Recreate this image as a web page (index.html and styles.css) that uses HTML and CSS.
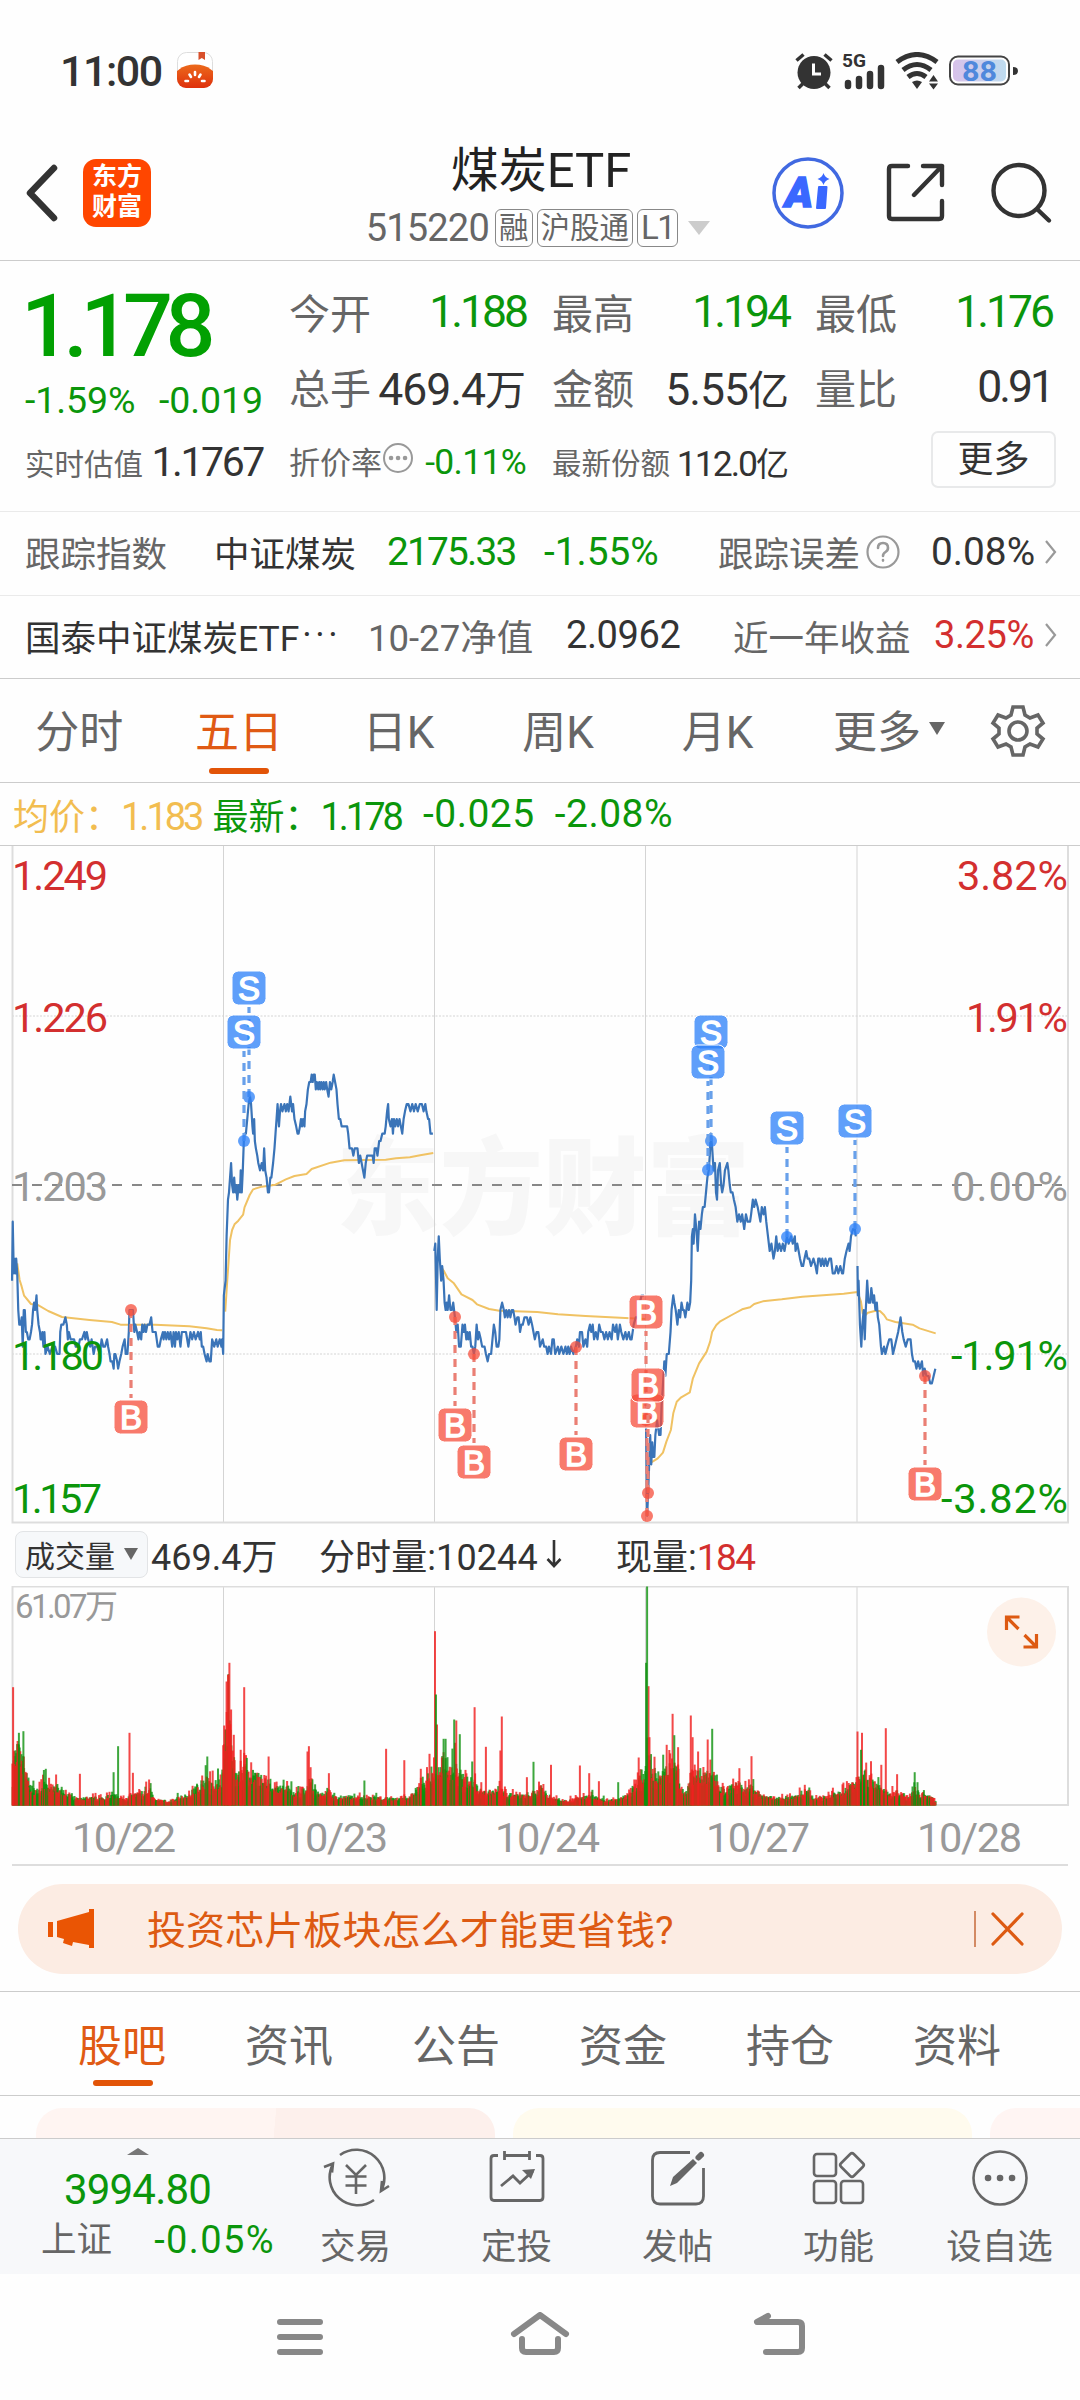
FILE: index.html
```html
<!DOCTYPE html>
<html lang="zh-CN">

<head>
    <meta charset="utf-8">
    <title>煤炭ETF</title>
    <link rel="stylesheet" href="styles.css">
</head>

<body>
    <div class="status">
        <span class="time">11:00</span>
        <svg class="app-ico" width="36" height="36" viewBox="0 0 36 36">
            <defs>
                <clipPath id="appClip"><rect width="36" height="36" rx="9" /></clipPath>
                <linearGradient id="tomato" x2="0" y2="1"><stop offset="0" stop-color="#ec6a1c" /><stop offset="1" stop-color="#d81404" /></linearGradient>
            </defs>
            <rect x=".5" y=".5" width="35" height="35" rx="9" fill="#fff" stroke="#ddd" />
            <ellipse cx="18" cy="30" rx="23" ry="17.5" fill="url(#tomato)" clip-path="url(#appClip)" />
            <path d="M21.500 0h6.500v8l-3.200-2-3.300 2z" fill="#d8502c" />
            <path d="M18 20v3M12.500 22.500l1.500 2.500M23.500 22.500l-1.500 2.500M8.500 29h2.500M25 29h2.500" stroke="#fff" stroke-width="2.600" stroke-linecap="round" />
        </svg>
        <div class="status-right">
            <svg width="38" height="38" viewBox="0 0 38 38">
                <circle cx="19" cy="20.500" r="16.500" fill="#333" />
                <path d="M1.500 8.500l7-6M36.500 8.500l-7-6M3.500 36l5-5M34.500 36l-5-5" stroke="#333" stroke-width="3.500" />
                <path d="M18.500 11.500V22H26" fill="none" stroke="#fff" stroke-width="3" />
            </svg>
            <svg class="signal" width="43" height="48" viewBox="0 -4 43 48">
                <text x="0" y="16" class="g5" textLength="24" lengthAdjust="spacingAndGlyphs">5G</text>
                <path d="M6 32v3M17 28v7M28 23v12M39 17v18" stroke="#333" stroke-width="6.500" stroke-linecap="round" />
            </svg>
            <svg class="wifi" width="44" height="38" viewBox="0 0 44 38">
                <path d="M2 10Q22-5 42 10M8 18Q22 7 36 18M13 25Q22 18 31 25" fill="none" stroke="#333" stroke-width="5" />
                <path d="M17 30q5-3 10 0l-5 7z" fill="#333" />
                <path d="M34 29.500l4.500-6.500 4.500 6.500zM34 31.500l4.500 6 4.500-6z" fill="#333" />
            </svg>
            <svg class="battery" width="70" height="32" viewBox="0 0 70 32">
                <defs>
                    <linearGradient id="bat"><stop offset="0" stop-color="#d8c2ea" /><stop offset="1" stop-color="#bedcf0" /></linearGradient>
                </defs>
                <rect x="1" y="1.500" width="59" height="28" rx="8" fill="#fff" stroke="#444" stroke-width="2" />
                <rect x="4" y="4.500" width="53" height="22" rx="5" fill="url(#bat)" />
                <path d="M64 12q5 0 5 4t-5 4z" fill="#333" />
                <text x="13" y="26" class="bat-num" textLength="35" lengthAdjust="spacingAndGlyphs">88</text>
            </svg>
        </div>
    </div>

    <div class="header">
        <svg class="back" width="34" height="58" viewBox="0 0 34 58"><path d="M29 4L5 29l24 25" fill="none" stroke="#333" stroke-width="6.500" stroke-linecap="round" stroke-linejoin="round" /></svg>
        <div class="logo">东方<br>财富</div>
        <div class="title">
            <h1>煤炭<span>ETF</span></h1>
            <p><span class="code">515220</span><i>融</i><i>沪股通</i><i class="l1">L1</i><b></b></p>
        </div>
        <svg class="ai" width="74" height="74" viewBox="0 0 74 74">
            <circle cx="37" cy="37" r="34" fill="#fff" stroke="#4169e1" stroke-width="3.500" />
            <text x="14" y="51" textLength="28" lengthAdjust="spacingAndGlyphs">A</text>
            <path d="M48 31h7.500l-1.500 21h-8z" fill="#3a68ff" stroke="#3a68ff" stroke-width="2" stroke-linejoin="round" />
            <path d="M52.500 17q1.300 4.500 6 6-4.700 1.500-6 6-1.300-4.500-6-6 4.700-1.500 6-6z" fill="#3a68ff" />
        </svg>
        <svg class="share" width="60" height="60" viewBox="0 0 60 60" fill="none" stroke="#333" stroke-width="4.400" stroke-linecap="round" stroke-linejoin="round">
            <path d="M22 3H6Q3 3 3 6V53Q3 56 6 56H53Q56 56 56 53V38M37 3H56V22M56 3L28 32" />
        </svg>
        <svg class="search" width="62" height="62" viewBox="0 0 62 62" fill="none" stroke="#333" stroke-width="4.400" stroke-linecap="round"><circle cx="28" cy="28.500" r="25.500" /><path d="M47 48l11 10.500" /></svg>
    </div>

    <div class="stats">
        <div class="price">
            <div class="big">1.178</div>
            <div class="chg"><span>-1.59%</span><span>-0.019</span></div>
            <div class="est"><label>实时估值</label><span>1.1767</span></div>
        </div>
        <div class="col">
            <p><label>今开</label><span class="green">1.188</span></p>
            <p class="wide"><label>总手</label><span>469.4<em>万</em></span></p>
            <p class="sm"><label>折价率<svg width="32" height="32" viewBox="0 0 32 32"><circle cx="16" cy="16" r="14" fill="none" stroke="#999" stroke-width="2" /><path d="M9 16h.1M16 16h.1M23 16h.1" stroke="#999" stroke-width="4.500" stroke-linecap="round" /></svg></label><span class="green">-0.11%</span></p>
        </div>
        <div class="col">
            <p><label>最高</label><span class="green">1.194</span></p>
            <p class="wide"><label>金额</label><span>5.55<em>亿</em></span></p>
            <p class="sm tight"><label>最新份额</label><span>112.0<em>亿</em></span></p>
        </div>
        <div class="col">
            <p><label>最低</label><span class="green">1.176</span></p>
            <p><label>量比</label><span>0.91</span></p>
            <button type="button">更多</button>
        </div>
    </div>

    <div class="line-row r1">
        <span class="gray">跟踪指数</span>
        <span>中证煤炭</span>
        <span class="green tight">2175.33</span>
        <span class="green">-1.55%</span>
        <span class="gray">跟踪误差<svg width="36" height="36" viewBox="0 0 36 36"><circle cx="18" cy="18" r="15.500" fill="none" stroke="#999" stroke-width="2.200" /><path d="M13 14q0-5 5-5t5 5q0 2.500-2.500 4T18 22M18 26v.6" fill="none" stroke="#999" stroke-width="2.600" stroke-linecap="round" /></svg></span>
        <span>0.08%</span>
        <svg class="chev" width="14" height="28" viewBox="0 0 14 28"><path d="M2 3l9 11-9 11" fill="none" stroke="#999" stroke-width="2.200" /></svg>
    </div>
    <div class="line-row r2">
        <span>国泰中证煤炭ETF<small>···</small></span>
        <span class="gray">10-27净值</span>
        <span>2.0962</span>
        <span class="gray">近一年收益</span>
        <span class="red">3.25%</span>
        <svg class="chev" width="14" height="28" viewBox="0 0 14 28"><path d="M2 3l9 11-9 11" fill="none" stroke="#999" stroke-width="2.200" /></svg>
    </div>

    <div class="tabs">
        <a>分时</a><a class="on">五日</a><a>日K</a><a>周K</a><a>月K</a><a class="more">更多<b></b></a>
        <svg width="56" height="56" viewBox="-28 -28 56 56" fill="none" stroke="#666" stroke-width="3.600">
            <circle r="9" />
            <path d="M-5-24H5L7-16L12-13L20-16L25-8L19-3V3L25 8L20 16L12 13L7 16L5 24H-5L-7 16L-12 13L-20 16L-25 8L-19 3V-3L-25-8L-20-16L-12-13L-7-16z" />
        </svg>
    </div>

    <div class="legend">
        <span class="yellow">均价：<i>1.183</i></span><span class="green">最新：<i>1.178</i></span><span class="green">-0.025</span><span class="green">-2.08%</span>
    </div>

    <!-- 价格走势 -->
    <svg class="chart" width="1080" height="678" viewBox="0 846 1080 678">
        <text class="water" x="336" y="1226" textLength="414" lengthAdjust="spacingAndGlyphs">东方财富</text>
        <g class="grid">
            <path d="M223.500 846V1523M434.500 846V1523M645.500 846V1523M857 846V1523" />
            <path d="M12 1016H1068M12 1354H1068" stroke-dasharray="2 1.500" />
            <path class="frame" d="M12.500 846V1522.500H1068V846" />
            <path class="mid" d="M12 1185H1068" stroke-dasharray="10 10" />
        </g>
        <svg x="0" y="1120" width="1080" height="420" viewBox="0 0 3136 1260" preserveAspectRatio="none" overflow="visible">
            <g id="avg"></g>
            <g id="prices"></g>
        </svg>
        <g class="axis">
            <text x="12" y="890" class="t-red" textLength="96">1.249</text>
            <text x="12" y="1032" class="t-red" textLength="96">1.226</text>
            <text x="12" y="1201" class="t-gray" textLength="96">1.203</text>
            <text x="12" y="1370" class="t-green" textLength="92">1.180</text>
            <text x="12" y="1513" class="t-green" textLength="90">1.157</text>
            <text x="957" y="890" class="t-red" textLength="111">3.82%</text>
            <text x="966" y="1032" class="t-red" textLength="102">1.91%</text>
            <text x="952" y="1201" class="t-gray" textLength="116">0.00%</text>
            <text x="951" y="1370" class="t-green" textLength="117">-1.91%</text>
            <text x="941" y="1513" class="t-green" textLength="127">-3.82%</text>
        </g>
        <g id="marks"></g>
    </svg>

    <div class="vol-head">
        <div class="select">成交量<b></b></div>
        <span class="v1">469.4万</span>
        <span class="v2">分时量:10244<svg width="16" height="30" viewBox="0 0 16 30"><path d="M8 1v26M1.500 20L8 27l6.500-7" fill="none" stroke="#333" stroke-width="2.600" /></svg></span>
        <span class="v3">现量:<em>184</em></span>
    </div>

    <!-- 成交量 -->
    <svg class="volume" width="1080" height="282" viewBox="0 1586 1080 282">
        <g class="grid">
            <path d="M223.500 1586V1805M434.500 1586V1805M645.500 1586V1805M857 1586V1805" />
            <path class="frame" d="M12.500 1586.500H1068V1805H12.500z" />
            <path class="frame" d="M12 1865H1068" />
        </g>
        <text class="vmax" x="15" y="1618" textLength="103">61.07万</text>
        <g id="bars"></g>
        <g class="dates">
            <text x="72" y="1852" textLength="104">10/22</text>
            <text x="283" y="1852" textLength="105">10/23</text>
            <text x="495" y="1852" textLength="105">10/24</text>
            <text x="706" y="1852" textLength="104">10/27</text>
            <text x="917" y="1852" textLength="105">10/28</text>
        </g>
        <circle cx="1021.500" cy="1632" r="34.500" fill="#fdf1e9" />
        <path d="M1006.500 1630v-13h13M1006.500 1617l12 12M1036.500 1634v13h-13M1036.500 1647l-12-12" fill="none" stroke="#dd5a12" stroke-width="3.200" />
    </svg>

    <div class="banner">
        <svg width="46" height="40" viewBox="0 0 46 40" fill="#ea5504"><path d="M0 13h5v15H0zM9 12l32-9V0h5v39h-5v-3l-16-3-1 4-9-3 1-4-7-2z" /></svg>
        <span>投资芯片板块怎么才能更省钱?</span>
        <svg class="close" width="52" height="38" viewBox="0 0 52 38"><path d="M1 1v36" stroke="#c66a3a" stroke-width="1.500" /><path d="M19 4l29 30M48 4L19 34" stroke="#dd5a12" stroke-width="3.200" stroke-linecap="round" /></svg>
    </div>

    <div class="tabs2">
        <a class="on">股吧</a><a>资讯</a><a>公告</a><a>资金</a><a>持仓</a><a>资料</a>
    </div>

    <div class="cards">
        <div class="card pink"></div>
        <div class="card yel"></div>
        <div class="card rose"></div>
    </div>

    <div class="toolbar">
        <div class="index">
            <b></b>
            <strong>3994.80</strong>
            <p><label>上证</label><span>-0.05%</span></p>
        </div>
        <a>
            <svg width="68" height="60" viewBox="0 0 68 60" fill="none" stroke="#666" stroke-width="2.600">
                <path d="M18 7A28 28 0 0 1 59 43M67 38l-8 5 1-10M52 52A28 28 0 0 1 11 16M2 19l9-3.500-1 9" />
                <path d="M24 17l10 10 10-10M34 27v19M23.500 28.500h21M23.500 37.500h21" />
            </svg>交易
        </a>
        <a>
            <svg width="60" height="60" viewBox="0 0 60 60" fill="none" stroke="#666" stroke-width="2.800">
                <path d="M11 7.500H7Q4 7.500 4 10.500V49Q4 52.500 7 52.500H53Q56 52.500 56 49V10.500Q56 7.500 53 7.500H49M17.500 3v9M42.500 3v9M17.500 7.500h25" />
                <path d="M14 38l12-10 7 7 13-12" /><path d="M35 22l13-1-4 10z" fill="#666" stroke="none" />
            </svg>定投
        </a>
        <a>
            <svg width="60" height="60" viewBox="0 0 60 60" fill="none" stroke="#666" stroke-width="2.800">
                <path d="M42 4.500H12Q4.500 4.500 4.500 12V48Q4.500 56 12 56H48Q55.500 56 55.500 48V20" />
                <path d="M22 38l3-9L45 11l4 4-20 20z" fill="#666" stroke="none" /><path d="M50.500 9.500l2.500-2.500" stroke-width="6" stroke-linecap="round" />
            </svg>发帖
        </a>
        <a>
            <svg width="60" height="60" viewBox="0 0 60 60" fill="none" stroke="#666" stroke-width="2.600">
                <rect x="5" y="6" width="22" height="22" rx="3" /><rect x="5" y="33" width="22" height="22" rx="3" /><rect x="32" y="33" width="22" height="22" rx="3" />
                <rect x="34" y="8" width="18" height="18" rx="2.500" transform="rotate(45 43 17)" />
            </svg>功能
        </a>
        <a>
            <svg width="60" height="60" viewBox="0 0 60 60" fill="none" stroke="#666" stroke-width="2.600">
                <circle cx="30" cy="30" r="26.500" /><path d="M18 30h.1M30 30h.1M42 30h.1" stroke-width="6.500" stroke-linecap="round" />
            </svg>设自选
        </a>
    </div>

    <div class="nav">
        <svg width="60" height="50" viewBox="0 0 60 50"><path d="M10 10h40M10 25h40M10 40h40" /></svg>
        <svg width="60" height="50" viewBox="0 0 60 50"><path d="M4 22L30 3l26 19M12 27v9q0 4 4 4h28q4 0 4-4v-9" /></svg>
        <svg width="60" height="50" viewBox="0 0 60 50"><path d="M18 4L7 10h41q4 0 4 4v22q0 4-4 4H16" /></svg>
    </div>

    <script>
        // x, price (last digits of 1.xxx)
        const days = [
            [35,190,37,198,40,191,42,193,45,191,47,193,50,191,53,186,56,184,60,184,63,185,66,181,69,186,72,186,75,183,78,183,82,182,86,182,90,183,93,184,96,186,99,187,102,186,106,188,108,186,112,184,116,183,118,182,121,182,123,183,126,181,129,183,132,180,138,181,145,180,152,181,160,181,166,180,173,180,175,183,178,184,184,184,190,185,194,184,197,182,200,183,205,182,215,182,220,181,228,181,232,182,238,182,245,183,248,182,252,183,256,182,262,181,266,182,272,180,276,181,282,181,290,180,295,182,300,181,305,181,311,182,314,181,318,180,321,179,326,179,330,178,332,180,335,180,340,179,343,178,347,179,352,180,356,181,362,182,365,180,370,180,374,183,376,186,380,186,386,186,390,183,393,184,398,183,402,182,405,183,410,182,413,184,417,183,420,184,424,183,428,184,434,184,439,185,443,183,452,183,458,181,463,181,467,182,473,183,475,182,479,183,483,182,487,183,491,182,495,183,500,181,504,183,508,181,511,183,515,182,519,183,524,181,528,183,540,183,547,181,553,183,558,182,563,183,568,182,575,183,580,182,583,183,586,181,590,181,594,180,600,179,603,180,608,179,612,179,616,182,622,181,628,182,632,181,638,182,643,181,645,182,648,180,650,188,655,190,658,196,662,201,665,202,668,204,671,206,674,203,677,202,680,204,683,202,686,203,689,201,693,203,697,202,699,205,702,202,705,205,708,209,710,210,714,210,718,212,722,214,726,215,729,214,733,211,735,210,738,212,740,209,743,208,747,207,750,206,755,205,760,206,764,205,767,208,770,205,774,204,778,202,781,202,785,204,788,204,793,206,797,208,800,210,803,212,806,214,810,211,813,213,816,214,820,213,826,214,830,213,834,214,838,213,843,215,848,213,851,214,855,212,860,211,864,210,867,210,871,211,874,212,877,211,880,212,884,211,886,213,890,214,894,216,898,217,902,217,905,218,908,217,911,218,914,218,917,216,920,217,924,216,927,217,930,216,933,217,937,216,940,217,943,216,947,217,950,216,954,215,958,217,962,216,966,217,969,218,973,217,977,216,980,214,984,212,988,212,992,211,1008,211,1011,210,1015,208,1022,208,1026,207,1030,208,1038,208,1042,206,1046,207,1050,206,1054,205,1058,204,1062,206,1066,207,1082,207,1085,206,1088,208,1093,208,1096,207,1101,209,1105,209,1110,210,1117,210,1120,211,1124,213,1127,214,1129,212,1134,211,1138,212,1141,210,1144,212,1148,211,1152,212,1156,211,1160,212,1164,211,1168,210,1172,212,1176,213,1181,214,1186,214,1192,213,1197,214,1202,213,1207,214,1213,213,1219,214,1225,214,1230,213,1235,214,1238,213,1243,212,1246,212,1250,210,1257,210],
            [1261,194,1264,195,1268,186,1271,193,1274,196,1277,193,1281,190,1284,192,1288,190,1291,187,1294,186,1297,187,1300,186,1304,188,1308,186,1312,186,1316,187,1321,185,1325,183,1329,184,1333,181,1338,181,1343,184,1347,183,1350,184,1354,182,1357,183,1360,182,1364,183,1368,181,1372,181,1376,180,1380,181,1384,184,1388,182,1391,183,1396,182,1400,181,1407,181,1411,180,1416,179,1420,180,1426,180,1430,182,1434,184,1438,183,1442,181,1447,181,1450,182,1453,186,1458,187,1463,186,1466,185,1470,186,1474,185,1478,186,1482,185,1486,186,1490,186,1494,185,1497,184,1502,185,1506,185,1510,183,1514,184,1518,184,1523,185,1530,185,1535,184,1540,185,1545,184,1549,183,1553,182,1558,183,1563,183,1566,182,1568,181,1576,182,1580,181,1586,181,1590,180,1594,181,1600,180,1604,182,1608,182,1612,180,1620,181,1624,180,1630,181,1636,180,1642,181,1646,180,1650,181,1654,180,1658,181,1665,180,1672,181,1676,182,1681,181,1684,183,1690,183,1694,181,1700,182,1705,181,1708,183,1713,184,1717,183,1721,184,1725,182,1730,183,1735,182,1740,184,1745,183,1750,183,1755,182,1760,183,1765,182,1770,183,1776,182,1780,184,1786,183,1790,184,1794,182,1800,184,1804,183,1810,182,1816,183,1820,182,1826,183,1830,182,1834,182,1840,184,1846,185,1852,185,1858,187,1863,188,1870,188],
            [1876,170,1879,158,1882,161,1885,165,1888,169,1891,165,1894,168,1897,166,1900,166,1903,169,1908,171,1911,170,1914,169,1918,169,1921,173,1924,175,1929,179,1932,177,1936,180,1942,180,1947,183,1950,186,1955,188,1958,187,1962,186,1967,184,1971,186,1975,185,1979,187,1983,186,1986,186,1990,185,1993,186,1996,187,2000,186,2004,187,2007,190,2009,196,2012,197,2014,195,2018,199,2022,197,2026,194,2030,198,2034,197,2038,199,2041,200,2046,200,2050,202,2054,204,2058,205,2061,207,2064,210,2068,208,2072,205,2076,206,2079,202,2082,201,2085,205,2090,206,2094,203,2097,202,2101,203,2105,205,2112,206,2115,205,2119,203,2122,202,2127,202,2131,201,2136,200,2141,198,2146,199,2151,198,2155,199,2161,197,2166,199,2171,198,2178,198,2181,199,2186,201,2190,200,2194,201,2200,200,2204,199,2208,198,2212,200,2217,199,2221,200,2225,198,2230,196,2235,194,2240,195,2246,193,2250,194,2254,196,2258,194,2263,195,2268,194,2273,195,2278,194,2285,196,2290,195,2297,196,2302,195,2308,196,2310,194,2315,195,2319,194,2323,193,2328,192,2332,192,2336,193,2341,194,2345,193,2350,193,2355,192,2362,193,2368,192,2372,191,2376,193,2380,193,2384,192,2388,193,2393,192,2397,193,2402,192,2408,193,2413,193,2418,191,2424,191,2429,192,2434,191,2440,192,2445,191,2448,191,2453,193,2458,194,2464,195,2467,194,2471,196,2477,197,2482,197,2485,196],
            [2490,192,2491,188,2493,190,2497,184,2501,181,2504,184,2508,186,2511,182,2514,186,2518,190,2522,187,2527,187,2530,189,2535,187,2538,188,2542,186,2546,187,2549,185,2553,184,2558,181,2561,180,2567,181,2571,180,2576,181,2582,182,2588,182,2593,180,2598,181,2603,182,2608,183,2615,185,2620,183,2624,182,2630,181,2636,182,2644,182,2648,180,2652,179,2657,179,2661,178,2666,179,2671,178,2677,179,2681,177,2685,178,2690,177,2696,177,2701,176,2706,176,2711,177,2716,178]
        ]
        // average price lines: x, y
        const avgs = [
            '50,430 57,480 63,500 70,527 90,552 112,556 140,573 180,591 260,600 325,606 350,614 450,614 550,619 600,625 630,630 645,631',
            '654,575 660,480 664,420 668,360 674,330 681,313 692,302 706,284 710,262 725,225 735,208 760,200 800,194 830,178 855,168 890,162 905,147 960,128 1000,121 1120,119 1150,115 1190,112 1220,106 1258,99',
            '1280,440 1290,455 1300,475 1318,490 1340,523 1372,540 1385,553 1420,567 1450,572 1560,576 1620,583 1700,588 1830,595 1874,597',
            '1890,1028 1910,1015 1925,998 1935,965 1948,930 1955,880 1965,845 1978,832 2003,817 2012,775 2030,730 2052,695 2062,665 2068,635 2080,615 2090,605 2130,582 2155,568 2178,562 2190,552 2215,544 2270,538 2330,530 2410,524 2450,521 2490,516 2500,545 2505,580 2513,585 2520,578 2540,573 2555,573 2567,585 2575,598 2600,606 2650,614 2670,625 2717,640'
        ]
        // type, x, badge y, dot y
        const marks = [
            ['S', 249, 988, 1097], ['S', 244, 1032, 1141], ['S', 711, 1032, 1141], ['S', 708, 1062, 1170],
            ['S', 787, 1128, 1237], ['S', 855, 1121, 1229],
            ['B', 131, 1417, 1310], ['B', 455, 1425, 1317], ['B', 474, 1462, 1354], ['B', 576, 1454, 1347],
            ['B', 646, 1312, 1420], ['B', 647, 1411, 1516], ['B', 648, 1385, 1493], ['B', 925, 1484, 1376]
        ]

        prices.innerHTML = days.map(d => {
            let s = ''
            for (let i = 0; i < d.length; i += 2) s += d[i] + ',' + (195 - (d[i + 1] - 203) * 22.05).toFixed(0) + ' '
            return '<polyline points="' + s + '"/>'
        }).join('')
        avg.innerHTML = avgs.map(a => '<polyline points="' + a + '"/>').join('')

        document.getElementById('marks').innerHTML = marks.map(([t, x, y, dot]) => {
            let from = dot > y ? y + 19 : y - 19
            return `<g class="m${t}"><path d="M${x} ${dot}V${from}"/><circle cx="${x}" cy="${dot}" r="6"/>` +
                `<rect x="${x - 17}" y="${y - 17}" width="34" height="34" rx="6.500"/><text x="${x}" y="${y + 12}">${t}</text></g>`
        }).join('')

        // volume
        const env = [35,150,45,200,60,200,75,110,90,60,105,50,125,80,140,60,160,70,185,50,200,35,215,20,260,25,300,25,330,35,345,25,375,25,390,40,410,40,435,60,445,20,500,10,520,30,545,35,570,60,600,90,625,80,645,90,650,220,665,330,675,200,690,110,705,130,725,130,735,100,770,100,785,60,800,60,830,70,860,40,890,60,900,90,910,50,940,40,955,60,970,25,1000,30,1050,25,1100,25,1150,20,1180,25,1210,50,1240,100,1260,120,1275,110,1290,190,1305,120,1330,140,1350,80,1370,90,1390,60,1410,45,1450,60,1470,40,1520,30,1560,40,1570,60,1600,25,1650,15,1680,25,1720,30,1760,15,1800,20,1830,50,1860,110,1875,120,1885,170,1900,120,1920,100,1940,150,1960,160,1975,80,1990,40,2010,100,2025,120,2050,110,2065,120,2080,100,2095,60,2110,40,2140,90,2160,50,2180,70,2210,30,2260,25,2310,30,2340,50,2360,25,2400,30,2450,50,2480,80,2490,110,2510,110,2530,80,2560,60,2590,40,2615,50,2640,30,2655,60,2670,40,2700,30,2718,10]
        const up = [38,355,232,95,376,218,386,98,433,78,651,240,658,372,662,392,666,428,671,288,679,212,709,355,699,167,780,147,897,178,893,162,902,115,955,97,1121,170,1174,136,1222,110,1247,155,1263,523,1269,243,1325,255,1378,295,1411,176,1457,267,1453,165,1530,85,1600,122,1684,120,1711,97,1739,73,1883,358,1886,205,1936,182,1953,275,1969,175,2006,270,2011,205,2027,162,2055,198,2147,112,2182,148,2337,62,2490,222,2503,218,2529,133,2559,122,2572,232,2605,94]
        const down = [55,218,68,223,133,110,330,100,343,178,602,147,1058,75,1266,333,1288,200,1294,200,1319,258,1335,214,1371,132,1549,131,1795,70,1876,428,1879,657,1958,211,2068,230,2500,167,2656,100,2664,70]
        let seed = 7
        const rnd = () => (seed = (seed * 16807) % 2147483647) / 2147483647
        const bar = (x, h, c) => `<rect class="${c}" x="${(x / 2.9037 - 1).toFixed(1)}" y="${(1805.5 - h / 3).toFixed(1)}" width="2" height="${(h / 3).toFixed(1)}"/>`
        let out = ''
        for (let x = 36, k = 0; x < 2718; x += 2.54) {
            while (env[k + 2] < x) k += 2
            let t = (x - env[k]) / (env[k + 2] - env[k])
            let top = env[k + 1] + (env[k + 3] - env[k + 1]) * t + 4
            out += bar(x + 1, top * (.35 + rnd() * .6), 'down')
            out += bar(x, top * (.55 + rnd() * rnd() * .9), rnd() < .76 ? 'up' : 'down')
        }
        for (let i = 0; i < up.length; i += 2) out += bar(up[i], up[i + 1], 'up')
        for (let i = 0; i < down.length; i += 2) out += bar(down[i], down[i + 1], 'down')
        bars.innerHTML = out
    </script>
</body>

</html>
```

FILE: styles.css
```css
* {
    box-sizing: border-box;
}

body {
    margin: 0;
    width: 1080px;
    height: 2400px;
    overflow: hidden;
    background: #fefefe;
    color: #333;
    font-family: Roboto, "Noto Sans CJK SC", sans-serif;
}

h1,
p {
    margin: 0;
    font-weight: normal;
}

i,
em {
    font-style: normal;
}

svg {
    display: block;
    flex: none;
}

.green {
    color: #0b960b;
}

.red {
    color: #d32f2f;
}

.gray {
    color: #666;
}

.yellow {
    color: #f2bd50;
}

/* status bar */
.status {
    display: flex;
    align-items: center;
    height: 126px;
    padding: 16px 61px 0 60px;
}

.time {
    width: 117px;
    font-size: 43px;
    font-weight: 500;
    letter-spacing: -1.5px;
}

.app-ico {
    margin-top: -2px;
}

.status-right {
    display: flex;
    align-items: center;
    margin-left: auto;
}

.signal {
    margin-left: 9px;
}

.wifi {
    margin-left: 10px;
}

.battery {
    margin-left: 10px;
}

.g5 {
    font-size: 19px;
    font-weight: bold;
    fill: #333;
}

.bat-num {
    font-size: 28px;
    font-weight: bold;
    fill: #4f88dc;
}

/* header */
.header {
    display: flex;
    align-items: center;
    height: 135px;
    padding-left: 25px;
    border-bottom: 1px solid #ccc;
}

.logo {
    width: 68px;
    height: 68px;
    margin-left: 24px;
    padding-top: 3px;
    border-radius: 13px;
    background: #ff4600;
    color: #fff;
    font-size: 25px;
    font-weight: bold;
    line-height: 30px;
    text-align: center;
}

.title {
    width: 620px;
    margin-left: 80px;
    text-align: center;
}

.title h1 {
    color: #222;
    font-size: 48px;
    line-height: 60px;
    margin-top: 6px;
}

.title h1 span {
    font-size: 49px;
}

.title p {
    display: flex;
    align-items: center;
    justify-content: center;
    height: 50px;
    padding-top: 3px;
    margin-left: -6px;
    color: #666;
}

.code {
    font-size: 38px;
    letter-spacing: -.8px;
    margin-right: 6px;
}

.title i {
    height: 38px;
    margin-right: 4px;
    padding: 0 3px;
    border: 1px solid #888;
    border-radius: 6px;
    font-size: 29.5px;
    line-height: 36px;
}

.title .l1 {
    font-size: 33px;
    letter-spacing: -1.5px;
}

.title b {
    margin-left: 6px;
    border: 11px solid transparent;
    border-top: 14px solid #ccc;
    border-bottom: 0;
}

.ai {
    margin-left: -80px;
}

.ai text {
    font-size: 43px;
    font-weight: 900;
    fill: #3a68ff;
    stroke: #3a68ff;
    stroke-width: 1.5px;
    font-style: italic;
}

.share {
    margin-left: 41px;
}

.search {
    margin-left: 45px;
}

/* quote numbers */
.stats {
    display: flex;
    height: 251px;
    padding-left: 25px;
    border-bottom: 1px solid #eaeaea;
}

.price {
    width: 238px;
}

.big {
    height: 110px;
    margin-left: -4px;
    padding-top: 15px;
    color: #02a002;
    font-size: 88px;
    font-weight: 500;
    line-height: 100px;
    letter-spacing: -7.5px;
}

.chg {
    display: flex;
    justify-content: space-between;
    height: 60px;
    color: #0b960b;
    font-size: 37.5px;
    line-height: 58px;
    letter-spacing: -.1px;
}

.est {
    display: flex;
    align-items: center;
    justify-content: space-between;
    height: 62px;
    font-size: 41px;
    letter-spacing: -2.4px;
}

.est label {
    color: #666;
    font-size: 29.5px;
    letter-spacing: 0;
}

.col {
    width: 237px;
    margin-left: 26px;
    padding-top: 12px;
}

.col p {
    display: flex;
    justify-content: space-between;
    align-items: center;
    height: 75px;
    font-size: 44.5px;
    letter-spacing: -3px;
    white-space: nowrap;
}

.col p > span {
    padding-top: 2px;
}

.col .wide {
    letter-spacing: -1px;
}

.col label {
    display: flex;
    align-items: center;
    color: #666;
    font-size: 41px;
    letter-spacing: 0;
}

.col em {
    font-size: 41px;
    letter-spacing: 0;
}

.col .sm {
    font-size: 35.5px;
    letter-spacing: -.7px;
}

.col .sm label {
    font-size: 31px;
}

.col .sm em {
    font-size: 33px;
}

.col .tight {
    letter-spacing: -2px;
}

.col .tight label {
    font-size: 29.5px;
}

.sm svg {
    margin-top: -6px;
}

.stats button {
    display: block;
    width: 125px;
    height: 57px;
    margin: 8px -4px 0 auto;
    padding: 0;
    border: 2px solid #e8e9ea;
    border-radius: 7px;
    background: none;
    color: #333;
    font-family: inherit;
    font-size: 36px;
    line-height: 50px;
}

.line-row {
    display: grid;
    align-items: center;
    height: 84px;
    padding-left: 25px;
    padding-bottom: 4px;
    border-bottom: 1px solid #eaeaea;
    font-size: 36px;
    white-space: nowrap;
}

.line-row span {
    display: flex;
    align-items: center;
}

.line-row svg {
    margin-left: 5px;
}

.line-row .tight {
    letter-spacing: -1.8px;
}

.r1 {
    grid-template-columns: 189px 173px 157px 174px 213px 108px 30px;
    font-size: 35.5px;
}

.r1 span:nth-child(3),
.r1 span:nth-child(4),
.r1 span:nth-child(6) {
    font-size: 38.8px;
}

.r2 {
    grid-template-columns: 343px 198px 167px 201px 110px 30px;
    height: 83px;
    border-color: #ccc;
    font-size: 35.5px;
}

.r2 .chev {
    margin-left: 0;
}

.r2 small {
    font-size: 36px;
    letter-spacing: 3.5px;
    margin-left: 3px;
}

.r2 span:nth-child(2) {
    font-size: 36.5px;
}

.r2 span:nth-child(3),
.r2 span:nth-child(5) {
    font-size: 38px;
    letter-spacing: -.4px;
}

/* period tabs */
.tabs {
    display: flex;
    align-items: center;
    height: 104px;
    padding-top: 1px;
    border-bottom: 1px solid #ccc;
}

.tabs a {
    position: relative;
    width: 159.600px;
    color: #666;
    font-size: 44px;
    line-height: 109px;
    height: 104px;
    text-indent: -1px;
    text-align: center;
}

.tabs .on,
.tabs2 .on {
    color: #e05a14;
}

.tabs .on::after,
.tabs2 .on::after {
    content: "";
    position: absolute;
    left: 50%;
    bottom: 9px;
    width: 60px;
    height: 6px;
    margin-left: -30px;
    border-radius: 3px;
    background: #e25408;
}

.tabs .more {
    display: flex;
    align-items: center;
    width: 155px;
    padding: 4px 0 0 36px;
    margin-right: 37px;
}

.tabs b {
    margin: -10px 0 0 8px;
    border: 8px solid transparent;
    border-top: 13px solid #666;
    border-bottom: 0;
}

.legend {
    display: flex;
    align-items: center;
    height: 63px;
    padding-left: 13px;
    border-bottom: 1px solid #ccc;
    font-size: 36px;
    white-space: nowrap;
}

.legend span {
    margin-right: 20px;
    font-size: 39px;
    letter-spacing: .5px;
}

.legend span:nth-child(1),
.legend span:nth-child(2) {
    font-size: 36px;
    letter-spacing: 0;
}

.legend span:nth-child(1) {
    margin-right: 11px;
}

.legend span:nth-child(2) {
    margin-right: 22px;
}

.legend i {
    font-size: 38px;
    letter-spacing: -3px;
}

/* charts */
.grid path {
    fill: none;
    stroke: #d4d4d4;
    stroke-width: 1;
}

.grid .frame {
    stroke: #ddd;
    stroke-width: 2;
}

.grid .mid {
    stroke: #888;
    stroke-width: 2;
}

.water {
    font-size: 106px;
    font-weight: 900;
    fill: #f7f7f7;
}

#avg polyline,
#prices polyline {
    fill: none;
    stroke: #f0c263;
    stroke-width: 2;
    stroke-linejoin: round;
    vector-effect: non-scaling-stroke;
}

#prices polyline {
    stroke: #3a74b8;
    stroke-width: 2.2;
}

.axis text {
    font-size: 41.5px;
}

.t-red {
    fill: #d32f2f;
}

.t-green {
    fill: #0b960b;
}

.t-gray {
    fill: #999;
}

#marks path {
    fill: none;
    stroke-width: 3.2;
    stroke-dasharray: 8 6;
}

#marks text {
    fill: #fff;
    font-family: "Liberation Sans", sans-serif;
    font-size: 33px;
    text-anchor: middle;
    stroke: #fff;
    stroke-width: 1.4px;
}

#marks rect {
    stroke: #fff;
    stroke-width: 1;
}

.mS circle,
.mS rect {
    fill: rgba(45, 129, 248, .76);
}

.mS path {
    stroke: #68a0ea;
}

.mB circle,
.mB rect {
    fill: rgba(246, 75, 56, .74);
}

.mB path {
    stroke: #ea7f74;
}

.vol-head {
    display: flex;
    align-items: center;
    height: 62px;
    padding: 0 0 2px 15px;
    font-size: 36px;
    white-space: nowrap;
}

.select {
    display: flex;
    align-items: center;
    width: 133px;
    height: 47px;
    padding-left: 9px;
    border: 1px solid #e2e4e6;
    border-radius: 8px;
    background: #f6f8fa;
    font-size: 30px;
}

.select b {
    margin-left: 9px;
    border: 7.5px solid transparent;
    border-top: 12px solid #666;
    border-bottom: 0;
}

.v1 {
    width: 168px;
    margin-left: 3px;
}

.v2 {
    display: flex;
    align-items: center;
    width: 297px;
    letter-spacing: .1px;
}

.v2 svg {
    margin-left: 8px;
}

.v3 em {
    color: #d32f2f;
    font-size: 37px;
    letter-spacing: -1.5px;
}

.vmax {
    font-size: 33px;
    fill: #999;
}

.dates text {
    font-size: 41.5px;
    fill: #999;
}

.up {
    fill: rgba(240, 32, 32, .82);
}

.down {
    fill: rgba(12, 145, 12, .8);
}

/* notice */
.banner {
    display: flex;
    align-items: center;
    width: 1044px;
    height: 90px;
    margin: 16px 18px 17px;
    padding: 0 36px 0 30px;
    border-radius: 45px;
    background: #fcece3;
    color: #dd5a12;
    font-size: 39.1px;
}

.banner span {
    margin: -5px 0 0 53px;
}

.close {
    margin-left: auto;
}

.tabs2 {
    display: flex;
    height: 105px;
    padding: 0 39px;
    border: solid #ccc;
    border-width: 1px 0;
}

.tabs2 a {
    position: relative;
    flex: 1;
    color: #666;
    font-size: 44px;
    line-height: 110px;
    text-indent: -1px;
    text-align: center;
}

.cards {
    display: flex;
    gap: 18px;
    height: 42px;
    padding: 12px 0 0 36px;
    overflow: hidden;
}

.card {
    flex: none;
    width: 459px;
    height: 80px;
    border-radius: 26px;
}

.pink {
    background: linear-gradient(95deg, #fff5f2 51.500%, #fdf0ec 51.600%);
}

.yel {
    background: #fffbee;
}

.rose {
    background: #fff5f3;
}

/* bottom bar */
.toolbar {
    display: flex;
    height: 136px;
    border-top: 1px solid #ccc;
    background: #f7f8fa;
}

.toolbar a {
    width: 161px;
    padding-top: 9px;
    color: #666;
    font-size: 35.5px;
    line-height: 54px;
    text-align: center;
    white-space: nowrap;
}

.toolbar a svg {
    margin: 0 auto 12px;
}

.index {
    width: 275px;
    text-align: center;
}

.index b {
    display: block;
    width: 22px;
    margin: 9px 0 0 127px;
    border: 11px solid transparent;
    border-bottom: 7px solid #777;
    border-top: 0;
}

.index strong {
    display: block;
    color: #0b960b;
    font-size: 42px;
    font-weight: normal;
    line-height: 50px;
    letter-spacing: -.8px;
    margin-top: 10px;
}

.index p {
    display: flex;
    justify-content: space-between;
    padding-left: 41px;
    color: #0b960b;
    font-size: 38px;
    line-height: 50px;
    letter-spacing: 1.4px;
}

.index label {
    color: #666;
    font-size: 35.5px;
    letter-spacing: 0;
}

.nav {
    display: flex;
    justify-content: center;
    gap: 180px;
    padding-top: 38px;
}

.nav svg {
    fill: none;
    stroke: #888;
    stroke-width: 6;
    stroke-linecap: round;
    stroke-linejoin: round;
}
```
